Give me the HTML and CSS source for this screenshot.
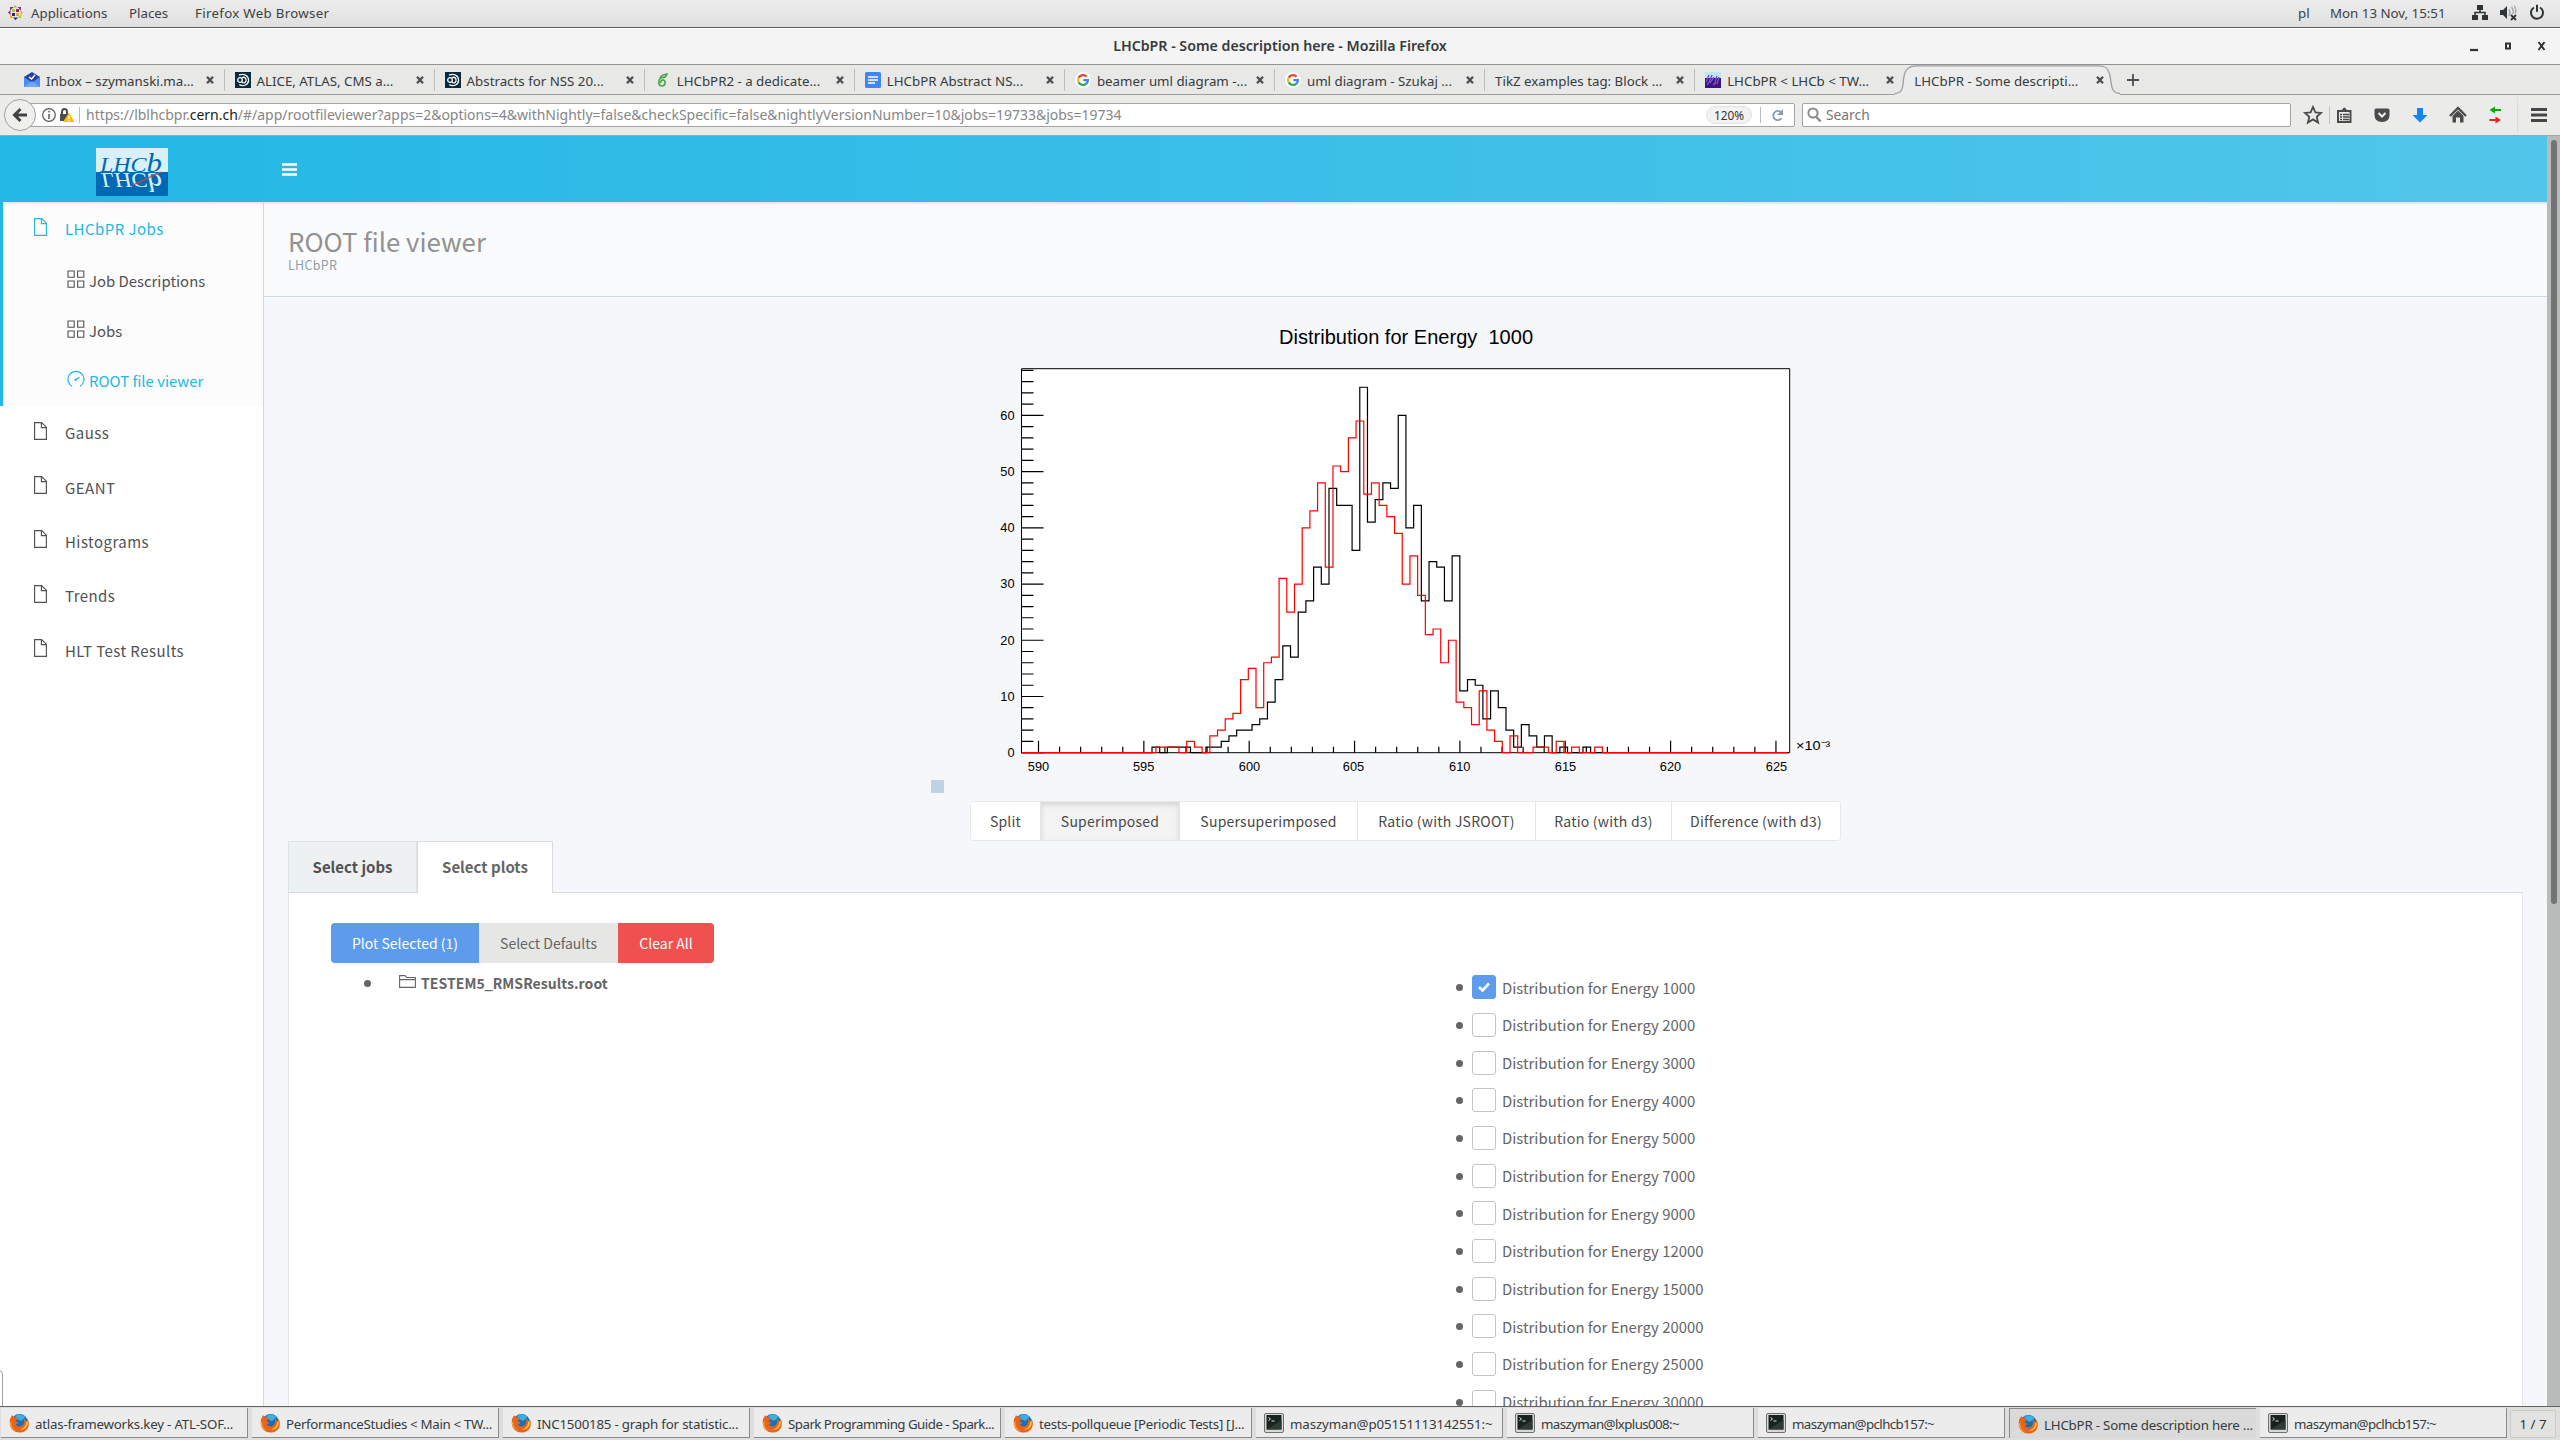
FILE: index.html
```html
<!DOCTYPE html>
<html lang="en">
<head>
<meta charset="utf-8">
<title>LHCbPR - Some description here</title>
<link rel="stylesheet" href="styles.css">
</head>
<body>
<svg class="defs" width="0" height="0">
  <defs>
    <symbol id="close" viewBox="0 0 8 8"><path d="M1 .8 7 7.2M7 .8 1 7.2" stroke="#4b5054" stroke-width="2.3"/></symbol>
    <symbol id="google" viewBox="0 0 16 16"><circle cx="8" cy="8" r="8" fill="#fff"/><g fill="none" stroke-width="2.3"><path d="M11.6 4.6A5 5 0 0 0 3.6 5.8" stroke="#ea4335"/><path d="M3.6 5.8a5 5 0 0 0 0 4.4" stroke="#fbbc05"/><path d="M3.6 10.2a5 5 0 0 0 7.8 1.4" stroke="#34a853"/><path d="M11.4 11.6A5 5 0 0 0 12.9 8.2H8.2" stroke="#4285f4"/></g></symbol>
    <symbol id="inspire" viewBox="0 0 16 16"><path fill="#0b2a3c" d="M0 0h16v16H0z"/><g fill="none" stroke="#fff" stroke-width="1.3"><path d="M4 3.2C9 .8 13.8 4 13.6 8.4 13.4 12.600 8.500 15 4.300 12.600"/><circle cx="5" cy="8" r="2.300"/><path d="M7 5.500c3-1 4.500 1 4 3.500-.5 2-3 2.500-4 1"/></g></symbol>
    <symbol id="doc" viewBox="0 0 13 18"><path d="M.6.6h7L12.400 5.200v12.200H.6zM7.400.8v4.800h4.800" fill="none" stroke="currentColor" stroke-width="1.150"/></symbol>
    <symbol id="grid" viewBox="0 0 18 18"><path d="M1 1h6.200v6.200H1zM10.600 1h6.200v6.200h-6.200zM1 11h6.200v6.200H1zM10.600 11h6.200v6.200h-6.200z" fill="none" stroke="currentColor" stroke-width="1.1"/></symbol>
    <symbol id="firefox" viewBox="0 0 20 20"><circle cx="10.500" cy="9.500" r="8.500" fill="#1c6fb5"/><path d="M6 3c3-2.500 8-2 10.500 1L12 8 8 6z" fill="#38b0e8"/><path d="M1.200 5.500C2 4.500 2.500 3.500 3 2c.8 1 1.500 1.800 3 2.200 1.500.2 2.500.3 3.200 1C8.500 6.500 7 7 6.700 8c.5 1.200 2 1 2.800 1.500C8.500 11.500 7 11 6.800 11.500c2 3 6.500 2.500 8-1 .8-2 .2-4-.8-5.500 3 1.500 3.500 4 3.200 6 .8-1 1.300-3.500 1.200-5.500C21 10 20 15.500 16 18c-4 2.600-10 2-13.200-2C.5 13 .3 9 1.200 5.500z" fill="#e8641b"/><path d="M2.500 8c-.8 4 1 8.500 5.500 10-1.500-.2-6.500-1.500-7-8z" fill="#fbb02a"/><path d="M17 8.500c.5 4-2.500 7.500-6.500 8 5 1 9-3 8.200-8z" fill="#fdc43a"/></symbol>
    <symbol id="term" viewBox="0 0 20 20"><rect x=".5" y=".5" width="19" height="19" rx="1.500" fill="#d8d8d4" stroke="#6f716d"/><path fill="#182320" d="M2.500 2h15v14.500h-15z"/><path d="M2.500 16.500 17.500 7v9.500z" fill="#2d3a36"/><path d="M4.500 4.500l2 1.500-2 1.500M7.500 8h3" stroke="#d9e0dc" fill="none"/></symbol>
  </defs>
</svg>

<header class="panel">
  <svg class="distro" width="15" height="15" viewBox="0 0 15 15"><path fill="#9ccd2a" d="M4 4h3v3H4zM7 0l2.500 2.500H4.500z"/><path fill="#932279" d="M8 4h3v3H8zM0 7.500 2.500 5v5z"/><path fill="#efa724" d="M8 8h3v3H8zM15 7.500 12.500 10V5z"/><path fill="#262577" d="M4 8h3v3H4zM7.500 15 5 12.500h5z"/><path fill="#932279" d="M2 2h3.500L2 5.500zM13 2v3.500L9.500 2z"/><path fill="#efa724" d="M2 13V9.500L5.500 13z"/><path fill="#9ccd2a" d="M13 13H9.500L13 9.500z"/></svg>
  <span class="m-apps">Applications</span><span class="m-places">Places</span><span class="m-ff">Firefox Web Browser</span>
  <span class="grow"></span>
  <span class="m-lang">pl</span><span class="m-date">Mon 13 Nov, 15:51</span>
  <svg class="tray" width="76" height="18" viewBox="0 0 76 18">
    <g fill="#2e3436"><path d="M5 1h6v5H5zM0 11h6v5H0zM10 11h6v5h-6z"/><path d="M3 11V8.500h10V11M8 6v3" fill="none" stroke="#2e3436" stroke-width="1.500"/>
    <path d="M28 6h3l4-4v13l-4-4h-3z"/><path d="M39 11l5 5M44 11l-5 5" stroke="#2e3436" stroke-width="1.800"/></g>
    <path d="M37 5q2 3.500 0 7M39.500 3q3 4 1 7M42 1.500q3 4.500 1 8" fill="none" stroke="#a5a7a7" stroke-width="1.300"/>
    <path d="M62 3.500a6 6 0 1 0 6 0M65 .8v7" fill="none" stroke="#2e3436" stroke-width="2"/>
  </svg>
</header>

<div class="titlebar">
  <span></span><b>LHCbPR - Some description here - Mozilla Firefox</b>
  <svg width="80" height="12" viewBox="0 0 80 12"><g stroke="#2e3436" fill="none"><path d="M0 10h8" stroke-width="2.200"/><path d="M36 3.500h4v5h-4z" stroke-width="2"/><path d="M68.500 2l6 8M74.500 2l-6 8" stroke-width="2"/></g></svg>
</div>

<nav class="tabs">
  <div class="tab first"><svg viewBox="0 0 16 16"><path fill="#4d8df6" d="M0 4.500 8 9l8-4.500V15H0z"/><path fill="#2a3f9e" d="M8 0l8 5-8 5.500L0 5z"/><path d="M5 5l2.500 2L11 3" stroke="#fff" fill="none" stroke-width="1.500"/><path fill="#6fa8fb" d="M0 15l8-6 8 6z"/></svg><span>Inbox – szymanski.ma...</span><svg class="x"><use href="#close"/></svg></div>
  <div class="tab"><svg><use href="#inspire"/></svg><span>ALICE, ATLAS, CMS a...</span><svg class="x"><use href="#close"/></svg></div>
  <div class="tab"><svg><use href="#inspire"/></svg><span>Abstracts for NSS 20...</span><svg class="x"><use href="#close"/></svg></div>
  <div class="tab"><svg viewBox="0 0 16 16"><path d="M5.500 6C2.500 9 3.500 14 7 14c3.500 0 4-5 1.500-6C7 7.600 5.500 9 5.500 11M5 7c0-3 3-4.500 7-5-1 3-3 4-6 3.500" fill="none" stroke="#4aa84a" stroke-width="1.700"/></svg><span>LHCbPR2 - a dedicate...</span><svg class="x"><use href="#close"/></svg></div>
  <div class="tab"><svg viewBox="0 0 16 16"><rect width="16" height="16" rx="1.500" fill="#4285f4"/><path d="M3 5h10M3 8h10M3 11h7" stroke="#fff" stroke-width="1.300"/></svg><span>LHCbPR Abstract NS...</span><svg class="x"><use href="#close"/></svg></div>
  <div class="tab"><svg><use href="#google"/></svg><span>beamer uml diagram -...</span><svg class="x"><use href="#close"/></svg></div>
  <div class="tab"><svg><use href="#google"/></svg><span>uml diagram - Szukaj ...</span><svg class="x"><use href="#close"/></svg></div>
  <div class="tab"><span>TikZ examples tag: Block ...</span><svg class="x"><use href="#close"/></svg></div>
  <div class="tab last"><svg viewBox="0 0 16 16"><path fill="#bfe4f2" d="M0 0h16v6H0z"/><path fill="#35148c" d="M0 6h16v10H0z"/><path d="M1 10 4 3M4 10l3-7M5 11l4-6M10 10l2-6M12 12l2-7M2 13l2-3M8 13l3-3" stroke="#7c4fc4" stroke-width="1.400"/><path d="M9 13l4-3" stroke="#d33"/></svg><span>LHCbPR &lt; LHCb &lt; TW...</span><svg class="x"><use href="#close"/></svg></div>
  <div class="tab active"><svg class="shape" viewBox="0 0 232 30" width="232" height="30"><path d="M0 28.500C10 28.500 7 18 9.500 9 11.500 2 16 .8 21 .8H204C209 .8 213 2 214.500 9 217 18 215 28.500 225 28.500V30H0z" fill="#ececec"/><path d="M0 28.500C10 28.500 7 18 9.500 9 11.500 2 16 .8 21 .8H204C209 .8 213 2 214.500 9 217 18 215 28.500 225 28.500" fill="none" stroke="#9d9f9f" stroke-width="1.300"/></svg><span>LHCbPR - Some descripti...</span><svg class="x"><use href="#close"/></svg></div>
  <svg class="plus" width="12" height="12" viewBox="0 0 12 12"><path d="M6 0v12M0 6h12" stroke="#4b5054" stroke-width="1.800"/></svg>
</nav>

<div class="toolbar">
  <div class="back"><svg width="16" height="16" viewBox="0 0 16 16"><path d="M15 8H3M8.500 2 2.500 8l6 6" fill="none" stroke="#404244" stroke-width="3"/></svg></div>
  <div class="url">
    <svg width="34" height="16" viewBox="0 0 34 16"><circle cx="7" cy="8" r="6.300" fill="none" stroke="#5a5a5a" stroke-width="1.200"/><path d="M7 7v5M7 3.800v1.700" stroke="#5a5a5a" stroke-width="1.500"/><path d="M18 7h9v7h-9z" fill="#4c4c4c"/><path d="M20 8V5q0-3 2.500-3T25 5v3" fill="none" stroke="#4c4c4c" stroke-width="2"/><path d="M27 5.500l5.500 9.500H21z" fill="#ffbf00"/><path d="M27 9v3M27 13v1.200" stroke="#fff" stroke-width="1.300"/></svg>
    <i class="bar"></i>
    <span class="addr">https://lblhcbpr.<em>cern.ch</em>/#/app/rootfileviewer?apps=2&amp;options=4&amp;withNightly=false&amp;checkSpecific=false&amp;nightlyVersionNumber=10&amp;jobs=19733&amp;jobs=19734</span>
    <span class="zoom">120%</span><i class="bar"></i>
    <svg class="reload" width="13" height="13" viewBox="0 0 13 13"><path d="M10.500 9.300A4.600 4.600 0 1 1 10.300 3.500" fill="none" stroke="#8a9bab" stroke-width="1.800"/><path d="M12 0v6H6z" fill="#8a9bab"/></svg>
  </div>
  <div class="search"><svg width="15" height="16" viewBox="0 0 15 16"><circle cx="6" cy="6" r="4.600" fill="none" stroke="#8c8c8c" stroke-width="2"/><path d="M9 9.500l4.500 5" stroke="#8c8c8c" stroke-width="2.500"/></svg><span>Search</span></div>
  <svg class="tools" width="252" height="36" viewBox="2300 97 252 36">
    <path d="M2313 107l2.400 5.400 5.600.5-4.300 3.900 1.400 5.800-5.100-3.200-5.100 3.200 1.400-5.800-4.300-3.900 5.600-.5z" fill="none" stroke="#4b4b4b" stroke-width="1.800"/>
    <path d="M2329.500 106v18" stroke="#c3c3c3"/>
    <path d="M2338 111h12.500v11H2338z" fill="none" stroke="#4b4b4b" stroke-width="2"/><path d="M2340 111.500q0-2 2.500-2 .5-2 1.800-2t1.800 2q2.500 0 2.500 2z" fill="#4b4b4b"/><path d="M2340 114.500h2m1 0h6M2340 117h2m1 0h6M2340 119.500h2m1 0h6" stroke="#4b4b4b" stroke-width="1.300"/>
    <path d="M2374.500 110q0-1.500 1.500-1.500h12q1.500 0 1.500 1.500v5q0 7-7.500 7t-7.500-7z" fill="#4b4b4b"/><path d="M2378.500 113l3.500 3.500 3.500-3.500" fill="none" stroke="#eee" stroke-width="2"/>
    <path d="M2417 108h6v7h4.500l-7.500 7.500-7.500-7.500h4.500z" fill="#1286f3"/>
    <path d="M2450 116l8-8 8 8" fill="none" stroke="#4b4b4b" stroke-width="2.400"/><path d="M2452.500 116l5.500-5.500 5.500 5.500v6.500h-3.500v-5h-4v5h-3.500z" fill="#4b4b4b"/>
    <path d="M2501 109v2h-6v2.500l-5.500-3.500 5.500-3.500v2.500z" fill="#0aa80a"/><path d="M2489.500 119v2h6v2.500l5.500-3.500-5.500-3.500v2.500z" fill="#ee2222"/>
    <path d="M2517.500 97v36" stroke="#dcdcdc"/><path d="M2531 109.500h16M2531 115h16M2531 120.500h16" stroke="#464646" stroke-width="2.800"/>
  </svg>
</div>

<div class="viewport">
  <div class="page">
    <header class="topnav">
      <svg class="logo" width="72" height="48" viewBox="0 0 72 48"><path fill="#d9f0fb" d="M0 0h72v24H0z"/><path fill="#0069b4" d="M0 24h72v24H0z"/><text class="lg" x="4" y="23.500" textLength="62" lengthAdjust="spacingAndGlyphs" fill="#0069b4">LHC<tspan class="lb">b</tspan></text><text class="lg" x="5" y="-24.500" transform="scale(1 -1)" textLength="61" lengthAdjust="spacingAndGlyphs" fill="#d9f0fb">LHC<tspan class="lb">b</tspan></text><path d="M37 37 65 24" stroke="#e8412c" stroke-width="1.200"/></svg>
      <svg class="burger" width="15" height="13" viewBox="0 0 15 13"><path d="M0 1.500h15M0 6.500h15M0 11.500h15" stroke="#fff" stroke-width="2.300"/></svg>
    </header>
    <div class="body">
      <aside>
        <div class="open">
          <a class="item on"><svg width="13" height="18"><use href="#doc"/></svg>LHCbPR Jobs</a>
          <a class="sub"><svg width="18" height="18"><use href="#grid"/></svg>Job Descriptions</a>
          <a class="sub"><svg width="18" height="18"><use href="#grid"/></svg>Jobs</a>
          <a class="sub on"><svg width="18" height="18" viewBox="0 0 18 18"><path d="M5 16.300A8 8 0 1 1 13 16.300" fill="none" stroke="currentColor" stroke-width="1.200"/><path d="M8.500 10l4-2.800" stroke="currentColor" stroke-width="1.400"/><circle cx="8.600" cy="9.800" r="1.200" fill="currentColor"/></svg>ROOT file viewer</a>
        </div>
        <a class="item"><svg width="13" height="18"><use href="#doc"/></svg>Gauss</a>
        <a class="item"><svg width="13" height="18"><use href="#doc"/></svg>GEANT</a>
        <a class="item"><svg width="13" height="18"><use href="#doc"/></svg>Histograms</a>
        <a class="item"><svg width="13" height="18"><use href="#doc"/></svg>Trends</a>
        <a class="item"><svg width="13" height="18"><use href="#doc"/></svg>HLT Test Results</a>
      </aside>
      <main>
        <div class="heading"><h3>ROOT file viewer</h3><small>LHCbPR</small></div>
        <section class="content">
          <svg class="chart" width="960" height="489" viewBox="926 312 960 489">
            <path fill="#bfd3e6" d="M931 780h13v13h-13z"/>
            <path class="frame" d="M1021.500 368.700h768.200v384h-768.200z"/>
            <text class="ttl" x="1279" y="344" textLength="254">Distribution for Energy&#160; 1000</text>
            <g class="lab end"><text x="1014.500" y="756.500">0</text><text x="1014.500" y="700.500">10</text><text x="1014.500" y="644.500">20</text><text x="1014.500" y="587.500">30</text><text x="1014.500" y="531.500">40</text><text x="1014.500" y="476.300">50</text><text x="1014.500" y="419.500">60</text></g>
            <g class="lab mid"><text x="1038.500" y="771">590</text><text x="1143.600" y="771">595</text><text x="1249.500" y="771">600</text><text x="1353.500" y="771">605</text><text x="1459.700" y="771">610</text><text x="1565.500" y="771">615</text><text x="1670.500" y="771">620</text><text x="1776.500" y="771">625</text></g>
            <text class="lab" x="1796" y="750" textLength="34" lengthAdjust="spacingAndGlyphs">×10⁻³</text>
            <g transform="translate(1021.500 752.700) scale(1 -5.622)"><path class="line k" d="M0 0h22M0 10h22M0 20h22M0 30h22M0 40h22M0 50h22M0 60h22M0 2h12M0 4h12M0 6h12M0 8h12M0 12h12M0 14h12M0 16h12M0 18h12M0 22h12M0 24h12M0 26h12M0 28h12M0 32h12M0 34h12M0 36h12M0 38h12M0 42h12M0 44h12M0 46h12M0 48h12M0 52h12M0 54h12M0 56h12M0 58h12M0 62h12M0 64h12M0 66h12M0 68h12"/></g>
            <g transform="translate(1038.500 752.700) scale(21.070 1)"><path class="line k" d="M0 0v-12M5 0v-12M10 0v-12M15 0v-12M20 0v-12M25 0v-12M30 0v-12M35 0v-12M1 0v-6M2 0v-6M3 0v-6M4 0v-6M6 0v-6M7 0v-6M8 0v-6M9 0v-6M11 0v-6M12 0v-6M13 0v-6M14 0v-6M16 0v-6M17 0v-6M18 0v-6M19 0v-6M21 0v-6M22 0v-6M23 0v-6M24 0v-6M26 0v-6M27 0v-6M28 0v-6M29 0v-6M31 0v-6M32 0v-6M33 0v-6M34 0v-6"/></g>
            <g transform="translate(1021.200 752.700) scale(7.695 -5.622)"><path class="line k" d="M0 0H17V1H18V0H19V1H22V0H24V1H26V2H27V3H28V4H30V5H31V6H32V9H33V13H34V19H35V17H36V25H37V27H38V33H39V30H40V47H41V44H43V36H44V65H45V41H46V45H47V48H48V47H49V60H50V40H51V44H52V27H53V34H54V33H55V27H56V35H57V11H58V13H59V12H60V6H61V11H62V8H63V4H64V1H65V5H66V3H67V1H68V3H69V0H70V1H71V0H73V1H74V0H99.800"/></g>
            <g transform="translate(1025.100 752.700) scale(7.697 -5.622)"><path class="line r" d="M-.4 0H17V1H20V0H21V2H22V1H23V0H24V3H25V4H26V6H27V7H28V13H29V15H30V8H31V16H32V17H33V31H34V25H35V30H36V40H37V43H38V48H39V33H40V51H41V50H42V56H43V59H44V46H45V48H46V44H47V42H48V39H49V30H50V35H51V28H52V21H53V22H54V16H55V20H56V9H57V8H58V5H59V11H60V4H61V2H62V0H63V3H64V0H66V1H68V0H69V2H70V0H71V1H72V0H74V1H75V0H99"/></g>
          </svg>
          <div class="modes"><button class="b1">Split</button><button class="b2 sel">Superimposed</button><button class="b3">Supersuperimposed</button><button class="b4">Ratio (with JSROOT)</button><button class="b5">Ratio (with d3)</button><button class="b6">Difference (with d3)</button></div>
          <div class="ptabs"><div class="pt1">Select jobs</div><div class="pt2">Select plots</div></div>
          <div class="pane">
            <div class="acts"><button class="plot">Plot Selected (1)</button><button class="def">Select Defaults</button><button class="clr">Clear All</button></div>
            <div class="cols">
              <div class="file"><i class="dot"></i><svg width="17" height="13" viewBox="0 0 17 13"><path d="M.6 12.400V.6h5.500l1.500 1.900h8.800v9.900zM.6 4.600h15.800" fill="none" stroke="#656565" stroke-width="1.100"/></svg><b>TESTEM5_RMSResults.root</b></div>
              <ul>
                <li><i class="dot"></i><i class="cb yes"><svg width="12" height="10" viewBox="0 0 12 10"><path d="M1 5l3.500 3.500L11 1.500" fill="none" stroke="#fff" stroke-width="2.600"/></svg></i>Distribution for Energy 1000</li>
                <li><i class="dot"></i><i class="cb"></i>Distribution for Energy 2000</li>
                <li><i class="dot"></i><i class="cb"></i>Distribution for Energy 3000</li>
                <li><i class="dot"></i><i class="cb"></i>Distribution for Energy 4000</li>
                <li><i class="dot"></i><i class="cb"></i>Distribution for Energy 5000</li>
                <li><i class="dot"></i><i class="cb"></i>Distribution for Energy 7000</li>
                <li><i class="dot"></i><i class="cb"></i>Distribution for Energy 9000</li>
                <li><i class="dot"></i><i class="cb"></i>Distribution for Energy 12000</li>
                <li><i class="dot"></i><i class="cb"></i>Distribution for Energy 15000</li>
                <li><i class="dot"></i><i class="cb"></i>Distribution for Energy 20000</li>
                <li><i class="dot"></i><i class="cb"></i>Distribution for Energy 25000</li>
                <li><i class="dot"></i><i class="cb"></i>Distribution for Energy 30000</li>
              </ul>
            </div>
          </div>
        </section>
      </main>
    </div>
  </div>
  <div class="scroll"><div class="thumb"></div></div>
  <div class="status"></div>
</div>

<footer class="tasks">
  <div class="task t1"><svg><use href="#firefox"/></svg><span>atlas-frameworks.key - ATL-SOF...</span></div>
  <div class="task t2"><svg><use href="#firefox"/></svg><span>PerformanceStudies &lt; Main &lt; TW...</span></div>
  <div class="task t1"><svg><use href="#firefox"/></svg><span>INC1500185 - graph for statistic...</span></div>
  <div class="task t3"><svg><use href="#firefox"/></svg><span>Spark Programming Guide - Spark...</span></div>
  <div class="task t2"><svg><use href="#firefox"/></svg><span>tests-pollqueue [Periodic Tests] [J...</span></div>
  <div class="task t0"><svg><use href="#term"/></svg><span>maszyman@p05151113142551:~</span></div>
  <div class="task t4"><svg><use href="#term"/></svg><span>maszyman@lxplus008:~</span></div>
  <div class="task t4"><svg><use href="#term"/></svg><span>maszyman@pclhcb157:~</span></div>
  <div class="task cur t1"><svg><use href="#firefox"/></svg><span>LHCbPR - Some description here ...</span></div>
  <div class="task t4"><svg><use href="#term"/></svg><span>maszyman@pclhcb157:~</span></div>
  <div class="pager">1 / 7</div>
</footer>
</body>
</html>
```
FILE: styles.css
```css
* { box-sizing: border-box; }
body { margin: 0; width: 2560px; height: 1440px; overflow: hidden; display: flex; flex-direction: column; font: 13.3px/20px "Noto Sans", sans-serif; color: #2e3436; }
svg { display: block; flex: none; }
span, b, a, button, li { white-space: nowrap; }
.defs { position: absolute; }
.grow { flex: 1; }

.panel { flex: none; height: 28px; display: flex; align-items: center; padding: 0 12px 2px 8px; background: linear-gradient(#ececec, #e0e0e0); border-bottom: 1px solid #5c5c5c; color: #3c4143; }
.m-apps { width: 98px; margin-left: 8px; }
.m-places { width: 66px; }
.m-ff { letter-spacing: .3px; }
.m-lang { width: 32px; }
.m-date { width: 142px; }

.titlebar { flex: none; height: 37px; display: grid; grid-template-columns: 1fr auto 1fr; align-items: center; background: #f4f4f4; border-bottom: 1px solid #93938f; border-top: 1px solid #fff; color: #363b3d; padding-bottom: 2px; }
.titlebar b { font-weight: 600; font-size: 14.200px; }
.titlebar svg { justify-self: end; margin-right: 10px; }

.tabs { flex: none; height: 30px; display: flex; align-items: center; background: #e8e8e6; border-bottom: 1px solid #9d9d9b; color: #363b3d; }
.tab { width: 210.100px; height: 22px; display: flex; align-items: center; padding: 1px 10px 0 10px; border-right: 1px solid #bdbdbb; flex: none; }
.tab svg { width: 16px; height: 16px; margin-right: 6px; }
.tab span { flex: 1; padding-top: 1px; }
.tab .x { width: 8px; height: 8px; margin: 0; }
.tab.first { width: 224.500px; padding-left: 24px; }
.tab.last { border-color: transparent; }
.tab.active { position: relative; height: 30px; border: 0; padding: 1px 11px 0 9px; margin-left: 0; }
.tab.active span, .tab.active .x { position: relative; }
.tab .shape { position: absolute; left: -10px; top: 0; width: 232px; height: 30px; margin: 0; }
.plus { margin-left: 12px; }

.toolbar { flex: none; height: 41px; display: flex; align-items: center; padding: 0 8px 0 4px; background: #ebebea; border-bottom: 1px solid #a3a3a1; }
.back { position: relative; width: 32px; height: 32px; border-radius: 50%; border: 1px solid #a0a09e; background: #efefee; display: flex; align-items: center; justify-content: center; flex: none; }
.url { width: 1766px; height: 24px; margin-left: -7px; padding-left: 12px; background: #fff; border: 1px solid #a3a3a1; border-radius: 2px; display: flex; align-items: center; }
.bar { width: 1px; height: 16px; background: #bcbcbc; margin: 0 6px 0 3px; }
.addr { flex: 1; color: #868686; font-size: 13.980px; }
.addr em { font-style: normal; color: #1a1a1a; }
.zoom { width: 46px; height: 18px; margin-right: 5px; border: 1px solid #e2e2e2; border-radius: 9px; background: #f2f2f2; font-size: 11.800px; line-height: 16px; text-align: center; color: #333; }
.reload { margin: 0 10px 0 4px; }
.search { width: 489px; height: 24px; margin-left: 7px; padding-left: 4px; background: #fff; border: 1px solid #a3a3a1; border-radius: 2px; display: flex; align-items: center; color: #767676; font-size: 13.800px; }
.search span { margin-left: 4px; }
.tools { margin-left: 9px; }

.viewport { position: relative; flex: 1; min-height: 0; display: flex; overflow: hidden; }
.page { width: 2547px; display: flex; flex-direction: column; font-family: "Noto Sans CJK SC", "Noto Sans CJK JP", sans-serif; font-size: 15px; color: #656565; }
.scroll { width: 13px; background: #b9baba; padding: 4px 3px 0 4px; }
.thumb { height: 764px; border-radius: 3px; background: #737575; }
.status { position: absolute; left: -4px; top: 1234px; width: 7px; height: 40px; border: 1px solid #a4a4a4; border-radius: 0 4px 0 0; background: #fff; }

.topnav { flex: none; height: 66px; display: flex; align-items: center; background: linear-gradient(90deg, #23b7e5, #51c6ea); padding-left: 96px; }
.logo { margin-top: 6px; }
.lg { font: italic 21px "Liberation Serif", serif; }
.lb { font-size: 27px; }
.burger { margin-left: 114px; }
.body { flex: 1; display: flex; min-height: 0; }
aside { width: 264px; background: #fff; border-right: 1px solid #d4d7d9; color: #515253; }
.open { border-left: 3px solid #23b7e5; background: #fcfcfc; box-shadow: inset 0 3px 3px -2px #d8d8d8; }
.item { display: flex; align-items: center; height: 54.400px; padding-left: 34px; letter-spacing: .45px; }
.item svg { margin: -5px 18px 0 0; }
.open .item { padding-left: 31px; height: 54px; }
.sub { display: flex; align-items: center; height: 50px; padding-left: 64px; font-size: 14.900px; }
.sub svg { margin: -4px 4px 0 0; }
.on { color: #23b7e5; }

main { width: 2283px; background: #f5f7fa; }
.heading { height: 95px; padding: 20px 24px 0; background: #fafbfc; border-bottom: 1px solid #cfdbe2; box-shadow: inset 0 3px 3px -2px #d8d8d8; }
.heading h3 { margin: 0; font-size: 25.800px; line-height: 38px; font-weight: 400; color: #929292; }
.heading small { display: block; font-size: 12.500px; line-height: 12px; color: #909fa7; margin-top: -1px; letter-spacing: .3px; }
.content { padding: 15px 24px 0; }
.chart { margin-left: 638px; }
.frame { fill: #fff; stroke: #000; }
.line { fill: none; stroke-width: 1.200px; vector-effect: non-scaling-stroke; }
.k { stroke: #000; }
.r { stroke: #f00; }
.ttl { font: 20px "Liberation Sans", sans-serif; fill: #000; }
.lab { font: 12.800px "Liberation Sans", sans-serif; fill: #000; }
.end { text-anchor: end; }
.mid { text-anchor: middle; }

button { font: inherit; border: 0; padding: 0; height: 40px; line-height: 40px; color: inherit; }
.modes { display: flex; width: 871px; margin-left: 682px; border: 1px solid #e6e8e9; border-radius: 4px; background: #fff; overflow: hidden; height: 40px; color: #484848; }
.modes button { background: #fff; border-right: 1px solid #e4e6e7; line-height: 38px; height: 38px; font-size: 14px; letter-spacing: .22px; }
.b1 { width: 70px; } .b2 { width: 139px; } .b3 { width: 178px; } .b4 { width: 178px; } .b5 { width: 136px; } .b6 { flex: 1; }
.modes .b6 { border: 0; }
.modes .sel { background: #f3f3f3; box-shadow: inset 0 3px 5px rgba(0,0,0,.125); }
.ptabs { display: flex; height: 52px; font-weight: 600; font-size: 15px; color: #515253; border-bottom: 1px solid #d9dddf; }
.pt1 { width: 129px; height: 51px; border: 1px solid #dbe3e7; border-bottom: 0; background: #edf1f2; line-height: 49px; text-align: center; }
.pt2 { width: 136px; height: 52px; border: 1px solid #d9dddf; border-bottom: 0; background: #fff; line-height: 49px; text-align: center; color: #656565; }
.pane { height: 600px; padding: 30px 42px; background: #fff; border: solid #e0e6ea; border-width: 0 1px; }
.acts { display: flex; font-size: 14px; letter-spacing: .15px; }
.plot { width: 148px; background: #5d9cec; color: #fff; border-radius: 4px 0 0 4px; }
.def { width: 139px; background: #e6e6e4; }
.clr { width: 96px; background: #f05050; color: #fff; border-radius: 0 4px 4px 0; }
.cols { display: grid; grid-template-columns: 1125px 1fr; }
.dot { width: 7px; height: 7px; border-radius: 50%; background: #656565; flex: none; }
.file { display: flex; align-items: center; height: 41px; padding-left: 33px; }
.file svg { margin: -4px 5px 0 28px; }
.file b { font-weight: 600; font-size: 14px; letter-spacing: .06px; margin-top: -1px; }
ul { list-style: none; margin: 6px 0 0; padding: 0; }
li { display: flex; align-items: center; height: 37.670px; font-size: 14.900px; }
.cb { width: 24px; height: 24px; margin: -1px 6px 0 9px; border: 1px solid #c4c4c4; border-radius: 3px; background: #fff; display: flex; align-items: center; justify-content: center; }
.yes { background: #5d9cec; border-color: #5d9cec; }

.tasks { flex: none; height: 34px; display: flex; border-top: 1px solid #606060; background: #dededc; padding: 1px 0 2px 1px; }
.task { width: 247px; margin-right: 4px; flex: none; display: flex; align-items: center; padding: 1px 0 0 8px; background: #ececec; border: solid #8a8a88; border-width: 0 1px 1px 0; color: #363b3d; }
.task svg { width: 20px; height: 20px; margin-right: 6px; }
.task span { padding-top: 1px; }
.t0 { letter-spacing: -.1px; }
.t1 { letter-spacing: -.2px; }
.t2 { letter-spacing: -.33px; }
.t3 { letter-spacing: -.52px; }
.t4 { letter-spacing: -.6px; }
.cur { background: #dadada; border-width: 1px 0 0 1px; }
.pager { width: 46px; margin: 2px 0 0 -1px; border: 1px solid #cbcbc9; background: #e2e2e0; border-radius: 2px; text-align: center; line-height: 26px; }
```
